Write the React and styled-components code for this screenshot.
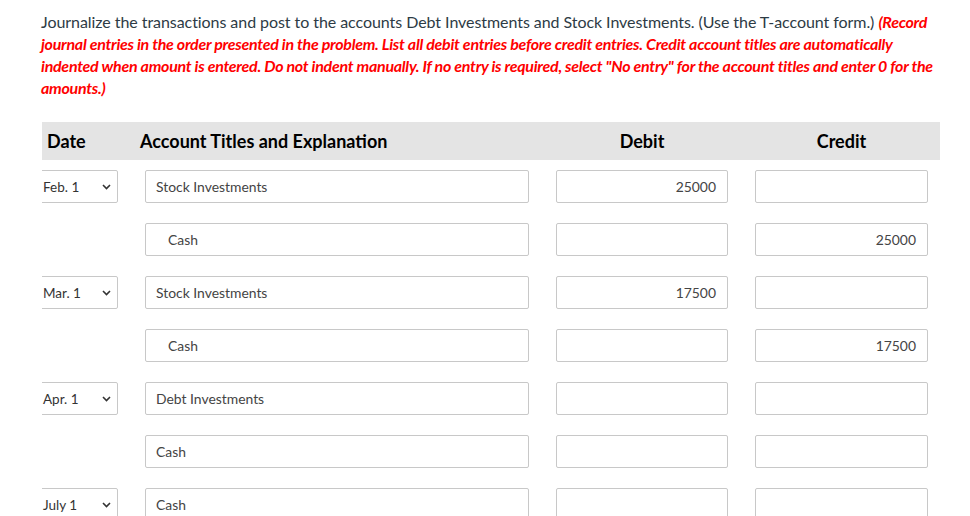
import React from "react";
import styled, { createGlobalStyle } from "styled-components";

const Global = createGlobalStyle`
  html, body { margin: 0; padding: 0; background: #fff; }
  body { font-family: Lato, "Open Sans", sans-serif; overflow: hidden; }
`;

const Page = styled.div`
  width: 970px;
  height: 516px;
  overflow: hidden;
  padding: 11px 0 0 41px;
  box-sizing: border-box;
`;

const Instructions = styled.p`
  margin: 0;
  width: 900px;
  font-size: 16px;
  line-height: 22px;
  letter-spacing: -0.06px;
  color: #2d3b45;
`;

const Emph = styled.em`
  color: #f00;
  font-weight: 700;
  font-style: italic;
  letter-spacing: -0.28px;
`;

const cols = "76px 384px 172px 173px";

const Table = styled.div`
  margin-top: 23px;
  margin-left: 1px;
  width: 898px;
`;

const HeaderRow = styled.div`
  display: grid;
  grid-template-columns: ${cols};
  column-gap: 27px;
  align-items: center;
  height: 38px;
  background: #e4e4e4;
  font-weight: 700;
  font-size: 18px;
  color: #000;
`;

const HeadCell = styled.div`
  padding-left: ${(p) => p.$pad || 0}px;
  margin-left: ${(p) => p.$ml || 0}px;
  text-align: ${(p) => (p.$center ? "center" : "left")};
  white-space: nowrap;
`;

const Rows = styled.div`
  display: flex;
  flex-direction: column;
  gap: 20px;
  margin-top: 10px;
`;

const Row = styled.div`
  display: grid;
  grid-template-columns: ${cols};
  column-gap: 27px;
  height: 33px;
`;

const DateCell = styled.div`
  overflow: hidden;
  height: 33px;
`;

const DateSelect = styled.div`
  margin-left: -10px;
  height: 33px;
  box-sizing: border-box;
  border: 1px solid #c8c8c8;
  border-radius: 2px;
  display: flex;
  align-items: center;
  justify-content: space-between;
  padding: 0 6px 0 10px;
  font-size: 13.5px;
  color: #333;
`;

const Field = styled.div`
  box-sizing: border-box;
  height: 33px;
  border: 1px solid #c8c8c8;
  border-radius: 2px;
  display: flex;
  align-items: center;
  justify-content: ${(p) => (p.$num ? "flex-end" : "flex-start")};
  padding: ${(p) => (p.$num ? "0 11px 0 0" : `0 0 0 ${p.$indent ? 22 : 10}px`)};
  font-size: 13.9px;
  color: #444;
  background: #fff;
`;

const Chevron = () => (
  <svg width="9" height="6" viewBox="0 0 9 6">
    <path d="M1 1 L4.5 4.5 L8 1" fill="none" stroke="#333" strokeWidth="1.6" />
  </svg>
);

const rows = [
  { date: "Feb. 1", acct: "Stock Investments", debit: "25000", credit: "" },
  { date: "", acct: "Cash", indent: true, debit: "", credit: "25000" },
  { date: "Mar. 1", acct: "Stock Investments", debit: "17500", credit: "" },
  { date: "", acct: "Cash", indent: true, debit: "", credit: "17500" },
  { date: "Apr. 1", acct: "Debt Investments", debit: "", credit: "" },
  { date: "", acct: "Cash", debit: "", credit: "" },
  { date: "July 1", acct: "Cash", debit: "", credit: "" },
];

export default function App() {
  return (
    <>
      <Global />
      <Page>
        <Instructions>
          Journalize the transactions and post to the accounts Debt Investments and Stock
          Investments. (Use the T-account form.){" "}
          <Emph>
            (Record journal entries in the order presented in the problem. List all debit
            entries before credit entries. Credit account titles are automatically indented
            when amount is entered. Do not indent manually. If no entry is required, select
            "No entry" for the account titles and enter 0 for the amounts.)
          </Emph>
        </Instructions>
        <Table>
          <HeaderRow>
            <HeadCell $pad={5}>Date</HeadCell>
            <HeadCell $ml={-5}>Account Titles and Explanation</HeadCell>
            <HeadCell $center>Debit</HeadCell>
            <HeadCell $center>Credit</HeadCell>
          </HeaderRow>
          <Rows>
            {rows.map((r, i) => (
              <Row key={i}>
                <DateCell>
                  {r.date && (
                    <DateSelect>
                      <span>{r.date}</span>
                      <Chevron />
                    </DateSelect>
                  )}
                </DateCell>
                <Field $indent={r.indent}>{r.acct}</Field>
                <Field $num>{r.debit}</Field>
                <Field $num>{r.credit}</Field>
              </Row>
            ))}
          </Rows>
        </Table>
      </Page>
    </>
  );
}
